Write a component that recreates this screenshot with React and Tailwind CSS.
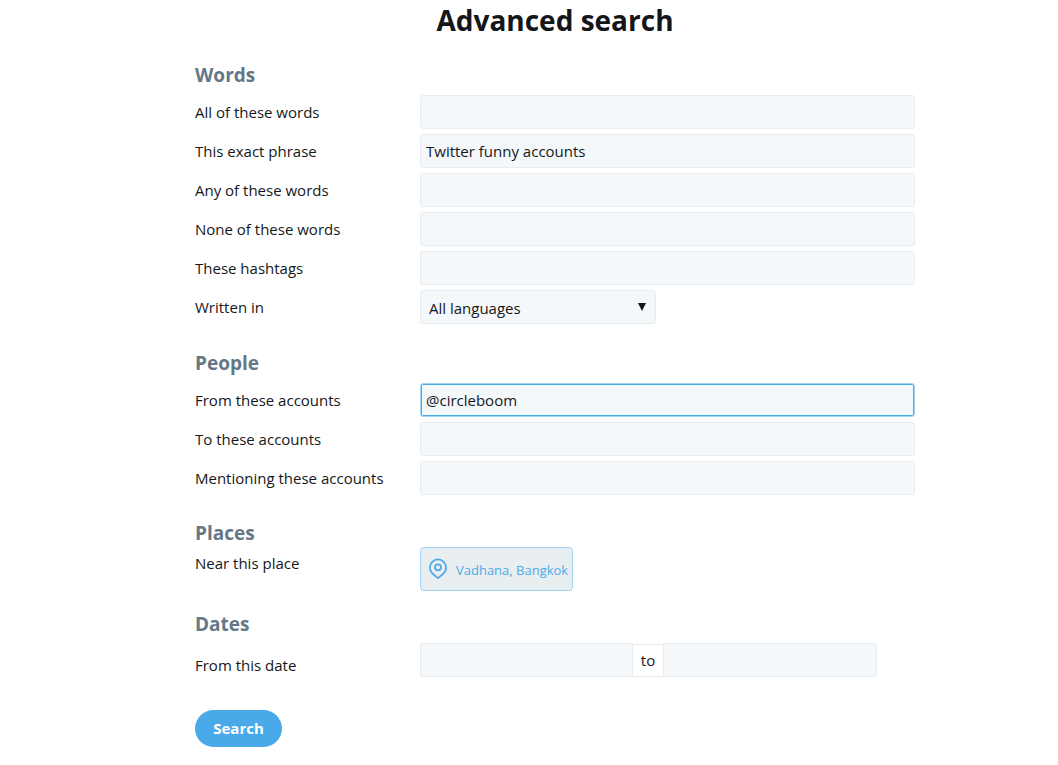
import { useState } from "react";

const WORD_FIELDS = [
  { id: "all", label: "All of these words" },
  { id: "phrase", label: "This exact phrase" },
  { id: "any", label: "Any of these words" },
  { id: "none", label: "None of these words" },
  { id: "hashtags", label: "These hashtags" },
];

const PEOPLE_FIELDS = [
  { id: "from", label: "From these accounts" },
  { id: "to", label: "To these accounts" },
  { id: "mentioning", label: "Mentioning these accounts" },
];

const INITIAL = { phrase: "Twitter funny accounts", from: "@circleboom" };

function PinIcon() {
  return (
    <svg viewBox="0 0 20 22" className="h-[22px] w-5 flex-shrink-0" fill="none" stroke="currentColor" strokeWidth="1.8" aria-hidden="true">
      <path d="M18.1 9.6C18.1 5 14.5 1.4 10 1.4S1.9 5 1.9 9.6c0 3.1 1.7 5.4 3.9 7.2 1.5 1.2 3 2.2 4.2 3.2 1.2-1 2.7-2 4.2-3.2 2.2-1.8 3.9-4.1 3.9-7.2z" strokeLinejoin="round" />
      <circle cx="10" cy="9.3" r="3" />
    </svg>
  );
}

function Row({ id, label, children }) {
  return (
    <div className="flex items-center">
      <label htmlFor={id} className="w-[225px] flex-shrink-0">
        {label}
      </label>
      {children}
    </div>
  );
}

function TextField({ id, label, value, active, onChange }) {
  return (
    <Row id={id} label={label}>
      <input
        id={id}
        type="text"
        value={value}
        onChange={onChange}
        className={`h-[34px] min-w-0 flex-1 rounded-[3px] border px-[5px] bg-[#f5f8fa] outline-none ${
          active ? "border-[#a3d3f2] inset-ring-1 inset-ring-[#4eaae6]" : "border-[#e6ecf0]"
        }`}
      />
    </Row>
  );
}

export default function App() {
  const [values, setValues] = useState(INITIAL);

  const update = (id) => (e) => setValues((p) => ({ ...p, [id]: e.target.value }));

  return (
    <div className="min-h-screen bg-white pl-[195px] pr-[143px] pb-4 text-[15px] leading-5 text-[#14171a] font-['Open_Sans','Noto_Sans',sans-serif]">
      <h1 className="text-center text-[28px] font-bold leading-10">Advanced search</h1>

      <form onSubmit={(e) => e.preventDefault()}>
        {/* Words */}
        <section className="pt-[23px]">
          <h2 className="mb-2 text-[19px] font-bold leading-6 text-[#657786]">Words</h2>
          <div className="flex flex-col gap-[5px]">
            {WORD_FIELDS.map((f) => (
              <TextField key={f.id} {...f} value={values[f.id] ?? ""} onChange={update(f.id)} />
            ))}
            <Row id="lang" label="Written in">
              <div className="relative w-[236px]">
                <select
                  id="lang"
                  className="h-[34px] w-full appearance-none rounded-[3px] border border-[#e6ecf0] bg-[#f5f8fa] px-2 pt-0.5 outline-none"
                >
                  <option>All languages</option>
                </select>
                <svg viewBox="0 0 8 8" className="pointer-events-none absolute right-[10px] top-[13px] h-2 w-2" aria-hidden="true">
                  <path d="M0 0h8L4 8z" fill="#14171a" />
                </svg>
              </div>
            </Row>
          </div>
        </section>

        {/* People */}
        <section className="pt-[27px]">
          <h2 className="mb-2 text-[19px] font-bold leading-6 text-[#657786]">People</h2>
          <div className="flex flex-col gap-[5px]">
            {PEOPLE_FIELDS.map((f) => (
              <TextField key={f.id} {...f} active={f.id === "from"} value={values[f.id] ?? ""} onChange={update(f.id)} />
            ))}
          </div>
        </section>

        {/* Places */}
        <section className="pt-[26px]">
          <h2 className="text-[19px] font-bold leading-6 text-[#657786]">Places</h2>
          <div className="flex items-start">
            <label htmlFor="place" className="w-[225px] flex-shrink-0 pt-2">
              Near this place
            </label>
            <button
              id="place"
              type="button"
              className="mt-0.5 flex h-11 items-center gap-2 rounded border border-[#a3d3f2] bg-[#e9eef1] pl-[7px] pr-1 text-[13px] text-[#4eaae6]"
            >
              <PinIcon />
              <span className="pt-0.5">Vadhana, Bangkok</span>
            </button>
          </div>
        </section>

        {/* Dates */}
        <section className="pt-[21px]">
          <h2 className="mb-[7px] text-[19px] font-bold leading-6 text-[#657786]">Dates</h2>
          <div className="flex items-start">
            <label htmlFor="since" className="w-[225px] flex-shrink-0 pt-3">
              From this date
            </label>
            <div className="flex items-end">
              <input
                id="since"
                type="text"
                className="h-[34px] w-[213px] rounded-l-[3px] border border-[#e6ecf0] bg-[#f5f8fa] px-1 outline-none"
              />
              <label htmlFor="until" className="h-[33px] w-[30px] border-y border-[#e6ecf0] pt-[5px] text-center">
                to
              </label>
              <input
                id="until"
                type="text"
                className="h-[34px] w-[214px] rounded-r-[3px] border border-[#e6ecf0] bg-[#f5f8fa] px-1 outline-none"
              />
            </div>
          </div>
        </section>

        <button type="submit" className="mt-[33px] h-[37px] w-[87px] rounded-full bg-[#4aa9e8] pb-0.5 text-[15px] font-bold text-white">
          Search
        </button>
      </form>
    </div>
  );
}
